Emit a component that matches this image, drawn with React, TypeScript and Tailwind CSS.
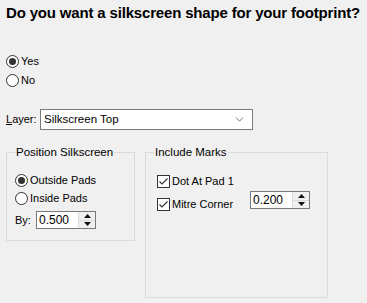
import { ChevronDown } from 'lucide-react'

const Radio = ({ checked, label }: { checked?: boolean; label: string }) => (
    <div className="flex items-center h-[13px]">
        <span className="w-[13px] h-[13px] rounded-full border border-[#333] bg-white flex items-center justify-center">
            {checked && <span className="w-[7px] h-[7px] rounded-full bg-[#333]" />}
        </span>
        <span className="ml-[2px] leading-none">{label}</span>
    </div>
)

const Check = ({ label }: { label: string }) => (
    <div className="flex items-center h-[13px]">
        <span className="w-[13px] h-[13px] border border-[#333] bg-white flex items-center justify-center">
            <svg width="11" height="11" viewBox="0 0 11 11">
                <path d="M1.5 5.5 L4 8 L9.5 2.5" stroke="#333" strokeWidth="1.2" fill="none" />
            </svg>
        </span>
        <span className="ml-[2px] leading-none">{label}</span>
    </div>
)

const Spin = ({ value, w }: { value: string; w: string }) => (
    <div className={`flex border border-[#7a7a7a] bg-white h-[18px] ${w}`}>
        <span className="flex-1 pl-[2px] leading-[16px] text-[12px]">{value}</span>
        <div className="w-[17px] flex flex-col bg-[#f0f0f0] border-l border-[#dcdcdc]">
            <div className="flex-1 flex items-center justify-center border-b border-[#dcdcdc]">
                <svg width="7" height="4" viewBox="0 0 7 4"><path d="M3.5 0 L7 4 L0 4 Z" fill="#111" /></svg>
            </div>
            <div className="flex-1 flex items-center justify-center">
                <svg width="7" height="4" viewBox="0 0 7 4"><path d="M0 0 L7 0 L3.5 4 Z" fill="#111" /></svg>
            </div>
        </div>
    </div>
)

const Group = ({ title, className, children }: { title: string; className: string; children: React.ReactNode }) => (
    <div className={`relative border border-[#dcdcdc] ${className}`}>
        <span className="absolute -top-[8px] left-[8px] bg-[#f0f0f0] px-[1px] leading-[14px] text-[11.5px]">{title}</span>
        {children}
    </div>
)

export default function App() {
    return (
        <div className="w-[367px] h-[303px] bg-[#f0f0f0] text-[11px] text-black overflow-hidden" style={{ fontFamily: '"Liberation Sans", Arial, sans-serif' }}>
            <h1 className="pt-[4px] pl-[6px] text-[15px] font-bold leading-[18px] whitespace-nowrap tracking-[-0.17px]">Do you want a silkscreen shape for your footprint?</h1>

            <div className="pl-[6px] mt-[33px] flex flex-col gap-[6px]">
                <Radio checked label="Yes" />
                <Radio label="No" />
            </div>

            <div className="flex items-center mt-[22px] pl-[6px]">
                <span className="w-[34px]"><span className="underline">L</span>ayer:</span>
                <div className="w-[213px] h-[21px] border border-[#7a7a7a] bg-white flex items-center pl-[3px] pr-[6px]">
                    <span className="flex-1 text-[11.5px]">Silkscreen Top</span>
                    <ChevronDown size={13} strokeWidth={1.5} className="text-[#555]" />
                </div>
            </div>

            <div className="flex items-start mt-[22px] pl-[6px] gap-[10px]">
                <Group title="Position Silkscreen" className="w-[129px] h-[89px] pl-[8px] pt-[21px]">
                    <div className="flex flex-col gap-[5px]">
                        <Radio checked label="Outside Pads" />
                        <Radio label="Inside Pads" />
                    </div>
                    <div className="flex items-center mt-[6px]">
                        <span className="w-[21px]">By:</span>
                        <Spin value="0.500" w="w-[60px]" />
                    </div>
                </Group>

                <Group title="Include Marks" className="w-[183px] h-[146px] pl-[11px] pt-[22px]">
                    <Check label="Dot At Pad 1" />
                    <div className="flex items-start mt-[3px]">
                        <div className="w-[93px] mt-[7px]"><Check label="Mitre Corner" /></div>
                        <Spin value="0.200" w="w-[60px]" />
                    </div>
                </Group>
            </div>
        </div>
    )
}
